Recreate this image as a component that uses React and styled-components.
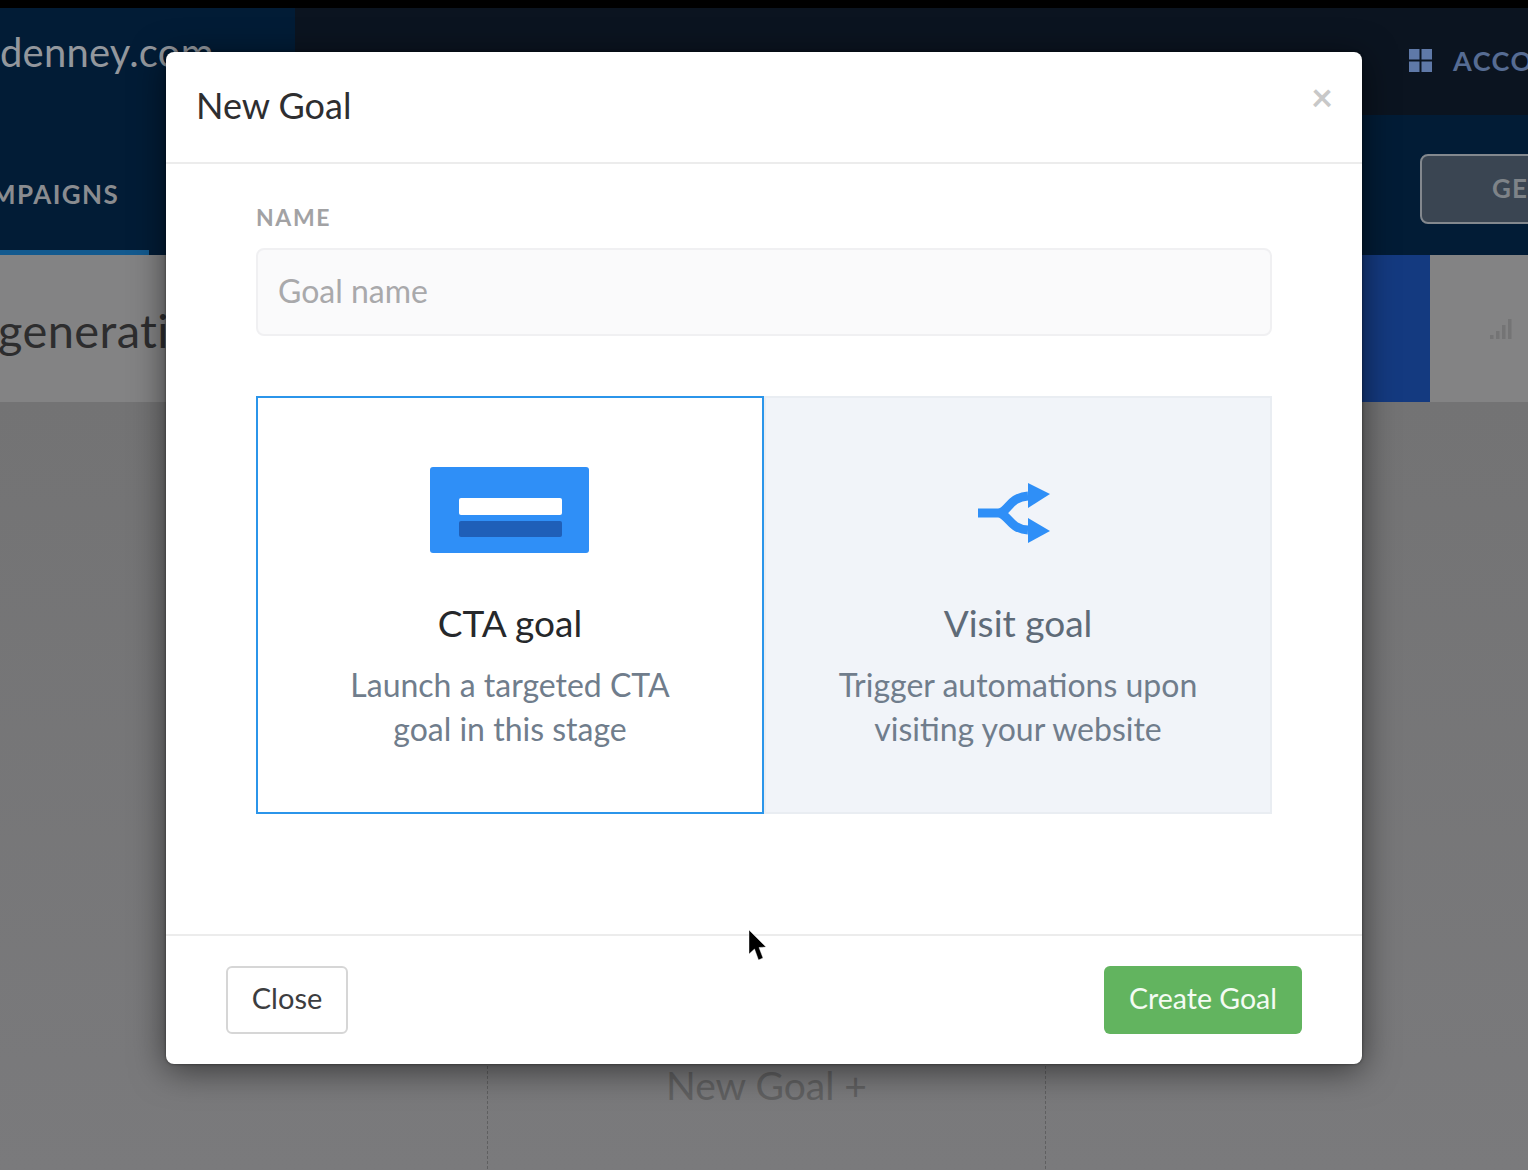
import React from "react";
import styled, { createGlobalStyle } from "styled-components";

const GlobalStyle = createGlobalStyle`
  html, body {
    margin: 0;
    padding: 0;
    background: #79797b;
  }
  * {
    box-sizing: border-box;
  }
`;

const App = () => {
  return (
    <Page>
      <GlobalStyle />
      <TopStrip />
      <Header>
        <Brand>
          <BrandText>denney.com</BrandText>
        </Brand>
        <Account>
          <GridIcon viewBox="0 0 23 23">
            <rect x="0" y="0" width="10.5" height="10.5" />
            <rect x="12.5" y="0" width="10.5" height="10.5" />
            <rect x="0" y="12.5" width="10.5" height="10.5" />
            <rect x="12.5" y="12.5" width="10.5" height="10.5" />
          </GridIcon>
          <AccountText>ACCOUNT</AccountText>
        </Account>
      </Header>
      <Nav>
        <NavTab>
          <NavText>CAMPAIGNS</NavText>
        </NavTab>
        <GetButton>GET</GetButton>
      </Nav>
      <Stats>
        <Heading>generation</Heading>
        <BlueBlock />
        <SignalCell>
          <svg width="22" height="22" viewBox="0 0 22 22" fill="#747475">
            <rect x="0" y="17" width="3.5" height="4" />
            <rect x="6" y="13" width="3.5" height="8" />
            <rect x="12" y="7" width="3.5" height="14" />
            <rect x="18" y="1" width="3.5" height="20" />
          </svg>
        </SignalCell>
      </Stats>
      <Canvas>
        <GhostColumn>
          <GhostText>New Goal +</GhostText>
        </GhostColumn>
      </Canvas>

      <Modal>
        <ModalHeader>
          <ModalTitle>New Goal</ModalTitle>
          <CloseX>×</CloseX>
        </ModalHeader>
        <ModalBody>
          <Label>NAME</Label>
          <NameInput placeholder="Goal name" />
          <Options>
            <Option $active>
              <IconSlot>
                <CtaIcon viewBox="0 0 159 86">
                  <rect width="159" height="86" rx="3" fill="#2f8ff7" />
                  <rect x="29" y="31" width="103" height="17" rx="2" fill="#fff" />
                  <rect x="29" y="54" width="103" height="16" rx="2" fill="#1f5fb8" />
                </CtaIcon>
              </IconSlot>
              <OptionTitle $active>CTA goal</OptionTitle>
              <OptionText>
                Launch a targeted CTA
                <br />
                goal in this stage
              </OptionText>
            </Option>
            <Option>
              <IconSlot>
                <SplitIcon viewBox="0 0 72 60">
                  <path
                    d="M0 30H20C30 30 31 14 50 13M20 30C30 30 31 46 50 47"
                    fill="none"
                    stroke="#2f8ff7"
                    strokeWidth="9"
                  />
                  <path d="M50 0L72 11L50 25Z" fill="#2f8ff7" />
                  <path d="M50 35L72 48L50 60Z" fill="#2f8ff7" />
                </SplitIcon>
              </IconSlot>
              <OptionTitle>Visit goal</OptionTitle>
              <OptionText>
                Trigger automations upon
                <br />
                visiting your website
              </OptionText>
            </Option>
          </Options>
        </ModalBody>
        <ModalFooter>
          <CloseButton>Close</CloseButton>
          <CreateButton>Create Goal</CreateButton>
        </ModalFooter>
      </Modal>

      <Cursor viewBox="0 0 20 34">
        <path
          d="M1 1V25L6.5 20L10.5 31L15 29L11 18.500L18 18Z"
          fill="#000"
          stroke="#fff"
          strokeOpacity="0.5"
          strokeWidth="0.8"
        />
      </Cursor>
    </Page>
  );
};

export default App;

const font = `"Lato", "Liberation Sans", sans-serif`;

const Page = styled.div`
  position: relative;
  width: 1528px;
  height: 1170px;
  overflow: hidden;
  display: flex;
  flex-direction: column;
  background: #79797b;
  font-family: ${font};
`;

const TopStrip = styled.div`
  height: 8px;
  background: #000;
`;

const Header = styled.div`
  height: 107px;
  display: flex;
  justify-content: space-between;
  background: #0b1420;
`;

const Brand = styled.div`
  width: 295px;
  padding-top: 20px;
  background: #021c36;
  overflow: hidden;
`;

const BrandText = styled.div`
  font-size: 40px;
  line-height: 48px;
  letter-spacing: 0.2px;
  color: #93979d;
`;

const Account = styled.div`
  width: 119px;
  padding: 41px 0 0 0;
  display: flex;
  align-items: flex-start;
  gap: 21px;
  overflow: hidden;
`;

const GridIcon = styled.svg`
  width: 23px;
  height: 23px;
  flex: none;
  fill: #5f79a8;
`;

const AccountText = styled.div`
  font-size: 27px;
  line-height: 24px;
  font-weight: 700;
  letter-spacing: 1.5px;
  color: #566c93;
`;

const Nav = styled.div`
  height: 140px;
  display: flex;
  justify-content: space-between;
  background: #021c36;
`;

const NavTab = styled.div`
  width: 149px;
  height: 140px;
  padding-top: 61px;
  overflow: hidden;
  border-bottom: 5px solid #135a8f;
`;

const NavText = styled.div`
  margin-left: -47px;
  font-size: 26px;
  line-height: 36px;
  font-weight: 700;
  letter-spacing: 1.4px;
  white-space: nowrap;
  color: #8a8c90;
`;

const GetButton = styled.div`
  width: 140px;
  height: 70px;
  margin: 39px -32px 0 0;
  padding-left: 70px;
  border: 2px solid #83888e;
  border-radius: 8px;
  background: #3a4552;
  font-size: 26px;
  line-height: 64px;
  font-weight: 700;
  letter-spacing: 1px;
  color: #7e8388;
`;

const Stats = styled.div`
  height: 147px;
  display: flex;
  background: #838384;
`;

const Heading = styled.div`
  width: 780px;
  margin-left: -2px;
  padding-top: 45px;
  font-size: 47px;
  line-height: 60px;
  letter-spacing: 0.4px;
  color: #2d2d2e;
`;

const BlueBlock = styled.div`
  width: 652px;
  background: #143a80;
`;

const SignalCell = styled.div`
  flex: 1;
  display: flex;
  padding: 63px 0 0 60px;
`;

const Canvas = styled.div`
  flex: 1;
  padding-left: 487px;
  background: linear-gradient(#737374, #7a7a7c);
`;

const GhostColumn = styled.div`
  width: 559px;
  height: 100%;
  border-left: 1px dashed #5f5f60;
  border-right: 1px dashed #5f5f60;
  text-align: center;
`;

const GhostText = styled.div`
  margin-top: 659px;
  font-size: 39px;
  line-height: 48px;
  color: #606061;
`;

const Modal = styled.div`
  position: absolute;
  left: 166px;
  top: 52px;
  width: 1196px;
  height: 1012px;
  display: flex;
  flex-direction: column;
  border-radius: 8px;
  background: #fff;
  box-shadow: 0 0 3px rgba(0, 0, 0, 0.5), 0 6px 34px rgba(0, 0, 0, 0.55);
`;

const ModalHeader = styled.div`
  position: relative;
  height: 112px;
  padding: 29px 30px 0;
  border-bottom: 2px solid #ececec;
`;

const ModalTitle = styled.div`
  font-size: 36px;
  line-height: 48px;
  color: #2e2e30;
`;

const CloseX = styled.div`
  position: absolute;
  right: 29px;
  top: 22px;
  font-size: 38px;
  line-height: 44px;
  font-weight: 700;
  color: #c8c8c8;
`;

const ModalBody = styled.div`
  flex: 1;
  padding: 39px 90px 0;
`;

const Label = styled.div`
  font-size: 23px;
  line-height: 28px;
  font-weight: 700;
  letter-spacing: 1.6px;
  color: #a2a2a4;
`;

const NameInput = styled.input`
  display: block;
  width: 100%;
  height: 88px;
  margin-top: 17px;
  padding: 0 20px 3px;
  border: 2px solid #f0f0f2;
  border-radius: 8px;
  background: #fafafb;
  font-family: ${font};
  font-size: 32px;
  outline: none;

  &::placeholder {
    color: #a9a9ab;
    opacity: 1;
  }
`;

const Options = styled.div`
  display: grid;
  grid-template-columns: 508px 508px;
  height: 418px;
  margin-top: 60px;
`;

const Option = styled.div`
  padding-top: 69px;
  border: 2px solid ${(p) => (p.$active ? "#2b95ea" : "#e9edf2")};
  background: ${(p) => (p.$active ? "#fff" : "#f1f4f9")};
  text-align: center;
`;

const IconSlot = styled.div`
  height: 86px;
  display: flex;
  justify-content: center;
  align-items: flex-start;
`;

const CtaIcon = styled.svg`
  width: 159px;
  height: 86px;
  margin-left: -1px;
`;

const SplitIcon = styled.svg`
  width: 72px;
  height: 60px;
  margin: 16px 0 0 -8px;
`;

const OptionTitle = styled.div`
  margin-top: 46px;
  font-size: 37px;
  line-height: 48px;
  color: ${(p) => (p.$active ? "#26282b" : "#5f6b78")};
`;

const OptionText = styled.div`
  margin-top: 16px;
  font-size: 32px;
  line-height: 44px;
  color: #707d8c;
`;

const ModalFooter = styled.div`
  height: 130px;
  display: flex;
  justify-content: space-between;
  padding: 30px 60px 0;
  border-top: 2px solid #ececec;
`;

const CloseButton = styled.button`
  width: 122px;
  height: 68px;
  padding-bottom: 6px;
  border: 2px solid #d6d6d6;
  border-radius: 6px;
  background: #fff;
  font-family: ${font};
  font-size: 29px;
  color: #3c3d40;
`;

const CreateButton = styled.button`
  width: 198px;
  height: 68px;
  padding-bottom: 6px;
  border: 0;
  border-radius: 6px;
  background: #62b45f;
  font-family: ${font};
  font-size: 28.5px;
  color: #f4fbf3;
`;

const Cursor = styled.svg`
  position: absolute;
  left: 748px;
  top: 929px;
  width: 20px;
  height: 34px;
`;
